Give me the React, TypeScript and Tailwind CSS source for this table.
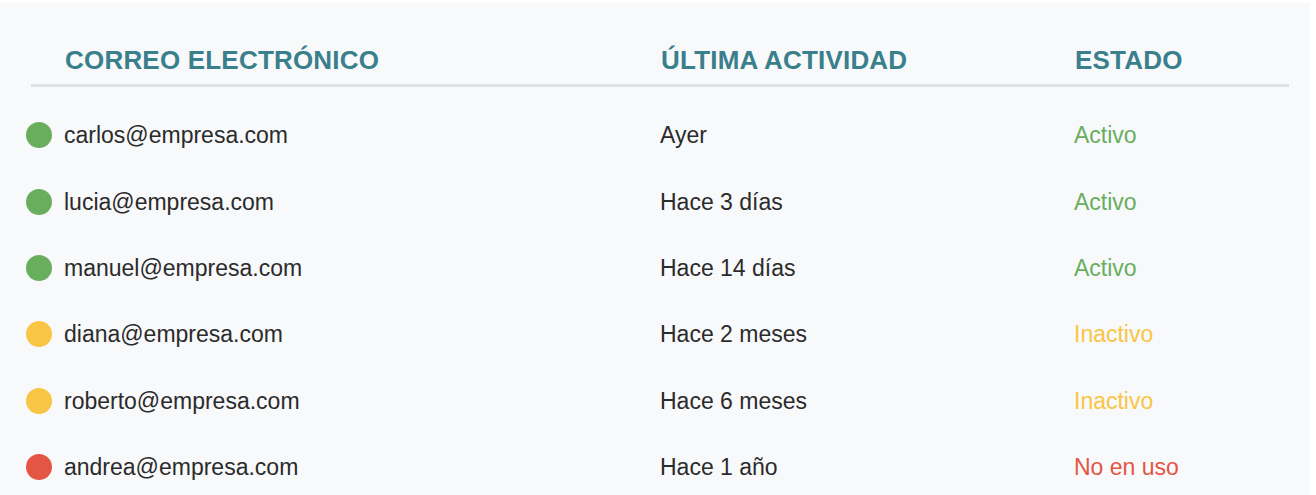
const users = [
  { email: "carlos@empresa.com", last: "Ayer", status: "Activo", tone: "green" },
  { email: "lucia@empresa.com", last: "Hace 3 días", status: "Activo", tone: "green" },
  { email: "manuel@empresa.com", last: "Hace 14 días", status: "Activo", tone: "green" },
  { email: "diana@empresa.com", last: "Hace 2 meses", status: "Inactivo", tone: "yellow" },
  { email: "roberto@empresa.com", last: "Hace 6 meses", status: "Inactivo", tone: "yellow" },
  { email: "andrea@empresa.com", last: "Hace 1 año", status: "No en uso", tone: "red" },
];

const dotColor: Record<string, string> = {
  green: "bg-[#69ae5d]",
  yellow: "bg-[#f8c545]",
  red: "bg-[#e35644]",
};

const textColor: Record<string, string> = {
  green: "text-[#69ae5d]",
  yellow: "text-[#f8c545]",
  red: "text-[#e35644]",
};

const App = () => {
  return (
    <div className="min-h-[495px] bg-white pt-[3px] pr-[6px] font-['Liberation_Sans',Arial,sans-serif]">
      <div className="min-h-[492px] bg-[#f8f9fb] pt-[42px] pl-[31px] pr-[21px]">
        {/* Header */}
        <div className="grid grid-cols-[630px_414px_1fr] border-b-[3px] border-[#e1e2e6] pb-[9px] text-[26px] leading-[30px] font-bold uppercase tracking-[0.2px] text-[#3a7f8c]">
          <div className="pl-[34px]">Correo electrónico</div>
          <div>Última actividad</div>
          <div>Estado</div>
        </div>

        {/* Rows */}
        <div className="mt-[15px]">
          {users.map((u) => (
            <div
              key={u.email}
              className="grid h-[66.4px] grid-cols-[630px_414px_1fr] items-center text-[23px] leading-[28px] text-[#2b2b2b]"
            >
              <div className="-ml-[5px] flex items-center gap-[12px]">
                <span className={`h-[26px] w-[26px] shrink-0 rounded-full ${dotColor[u.tone]}`} />
                <span>{u.email}</span>
              </div>
              <div className="-ml-px">{u.last}</div>
              <div className={`-ml-px ${textColor[u.tone]}`}>{u.status}</div>
            </div>
          ))}
        </div>
      </div>
    </div>
  );
};

export default App;
